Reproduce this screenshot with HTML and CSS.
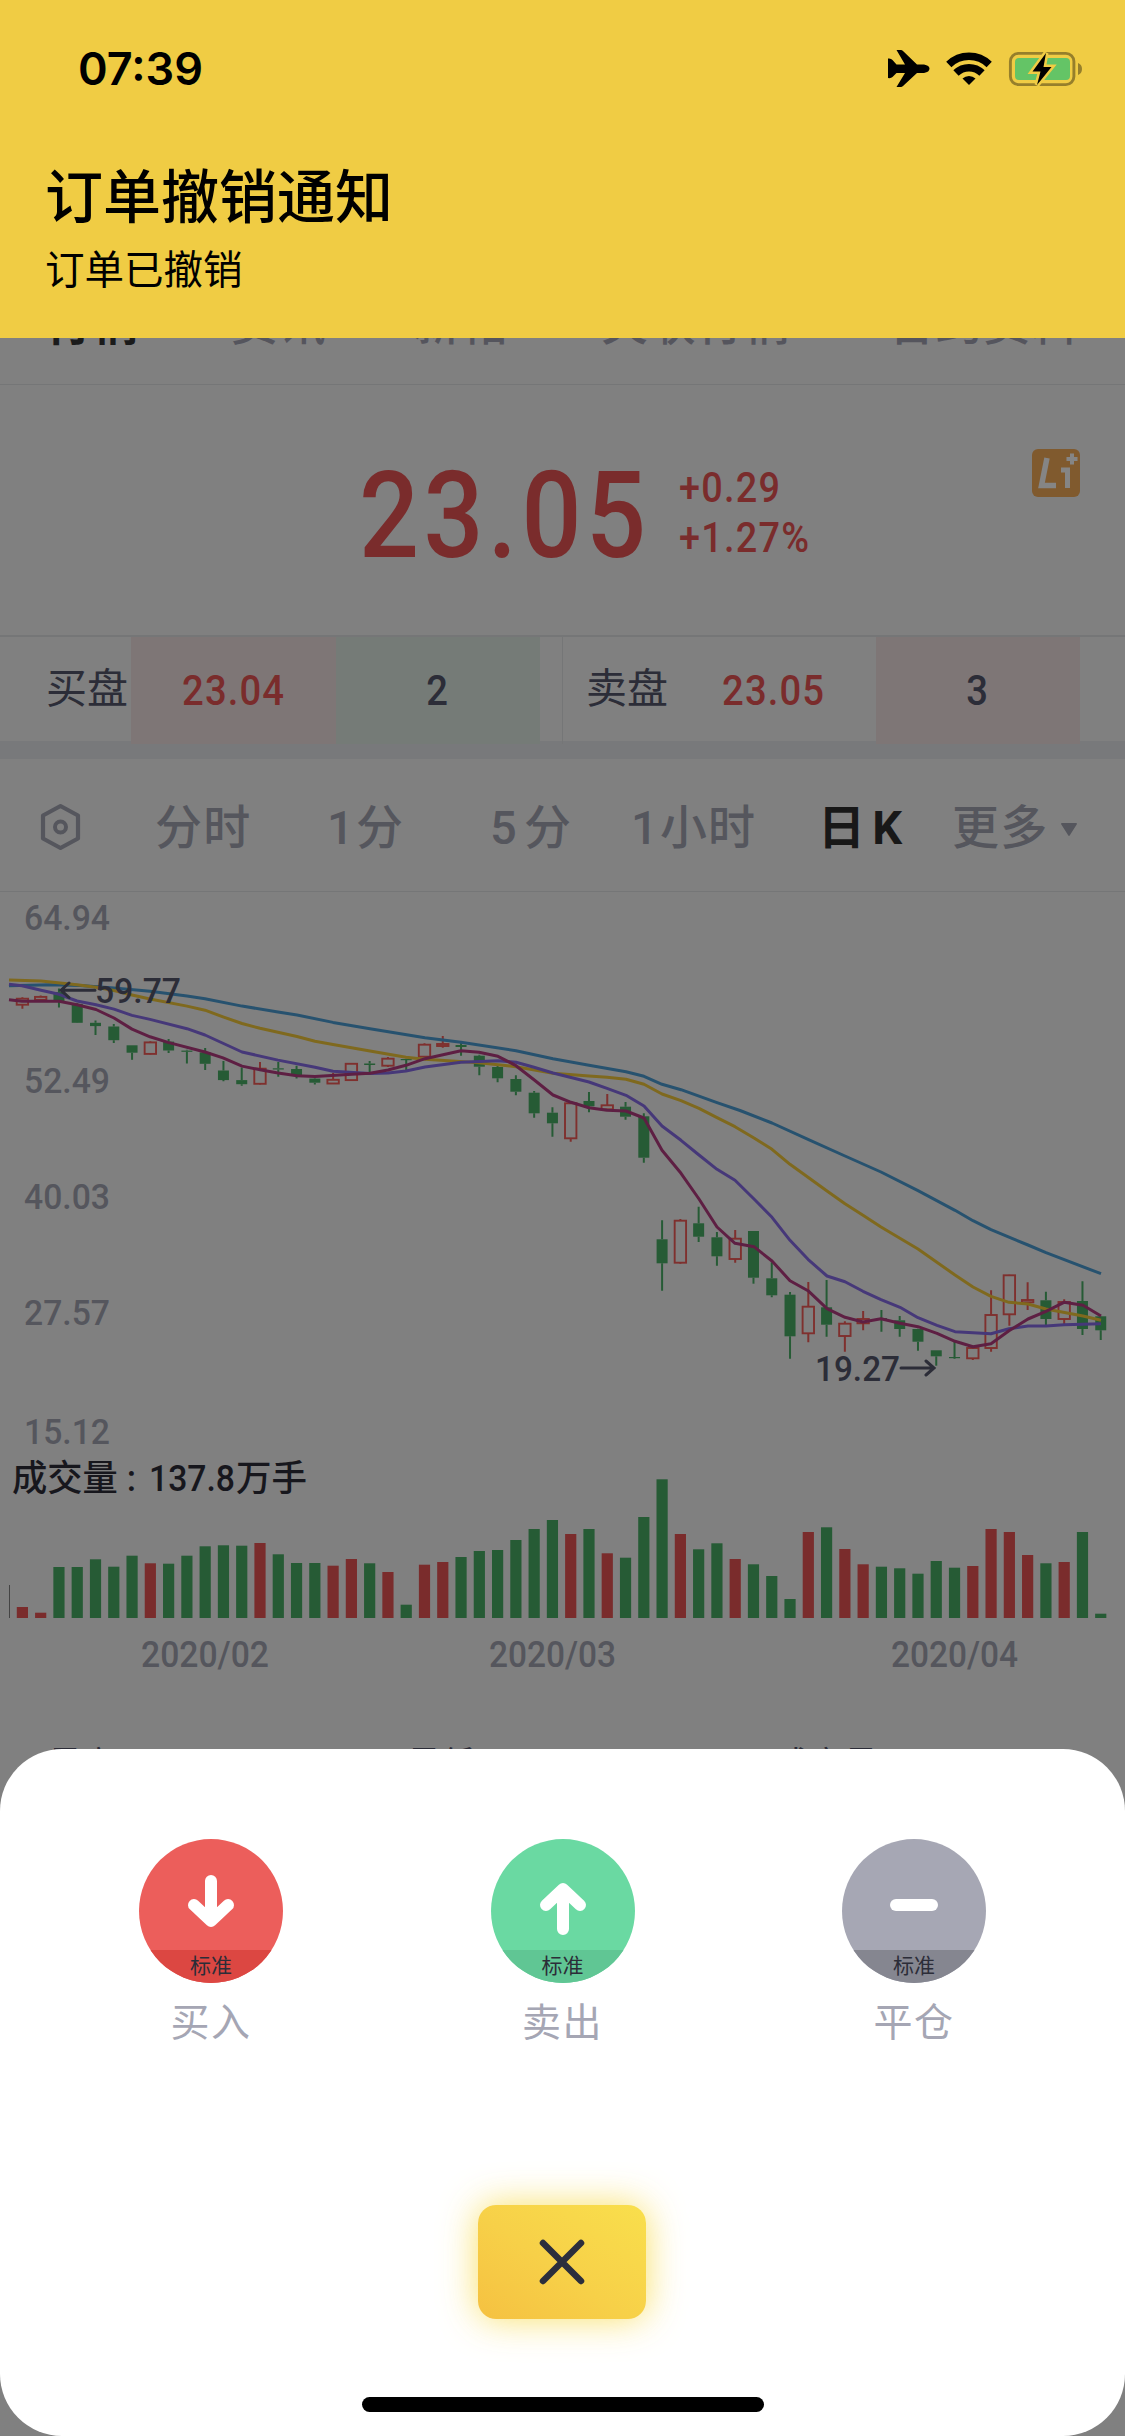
FILE: index.html
```html
<!DOCTYPE html>
<html lang="zh-CN">
<head>
<meta charset="utf-8">
<title>行情</title>
<link rel="stylesheet" href="styles.css">
</head>
<body>
<div class="phone">
  <main class="quote">
    <nav class="tabs">
      <span class="tab tab-active">行情</span>
      <span class="tab">资讯</span>
      <span class="tab">新帖</span>
      <span class="tab">关联行情</span>
      <span class="tab">合约资料</span>
    </nav>

    <section class="price">
      <div class="price-last">23.05</div>
      <div class="price-change"><span>+0.29</span><span>+1.27%</span></div>
      <svg class="level" viewBox="0 0 48 48">
        <rect width="48" height="48" rx="6" fill="#805a2e"/>
        <path d="M15 9 L9.500 36.500 H24" fill="none" stroke="#858585" stroke-width="5.500"/>
        <path d="M29 21 H35.500 V39" fill="none" stroke="#858585" stroke-width="5"/>
        <path d="M40 4.500 V15.500 M34.500 10 H45.500" fill="none" stroke="#858585" stroke-width="4"/>
      </svg>
    </section>

    <section class="depth">
      <span class="depth-name">买盘</span>
      <span class="depth-cell red tint-red"><b>23.04</b></span>
      <span class="depth-cell tint-green"><b>2</b></span>
      <span class="depth-name depth-ask">卖盘</span>
      <span class="depth-cell red"><b>23.05</b></span>
      <span class="depth-cell tint-red"><b>3</b></span>
    </section>

    <nav class="periods">
      <svg class="hex" viewBox="0 0 44 48"><path d="M22 3 L39.500 12.500 V35.500 L22 45 L4.500 35.500 V12.500 Z" fill="none" stroke="#55565d" stroke-width="4.200" stroke-linejoin="round"/><circle cx="22" cy="24" r="5.500" fill="none" stroke="#55565d" stroke-width="4"/></svg>
      <span>分时</span>
      <span>1<i></i>分</span>
      <span>5<i class="wide"></i>分</span>
      <span>1<i></i>小时</span>
      <span class="period-active">日<i class="wide"></i>K</span>
      <span class="more">更多<svg viewBox="0 0 18 15"><path d="M1 2 Q1 1 2 1 H16 Q17 1 17 2 L10 13 Q9 15 8 13 Z" fill="#55565d"/></svg></span>
    </nav>

    <svg class="chart" id="chart" viewBox="0 892 1125 840"></svg>

    <section class="stats"><span>最高</span><span>最低</span><span>成交量</span></section>
  </main>

  <header class="notice">
    <div class="status">
      <span class="clock">07:39</span>
      <svg class="status-icons" viewBox="885 45 200 48">
        <path d="M888 58.500 Q891 58 892.500 60 L896.500 64.500 H905 L896.500 50 H901 Q902 50 903 51 L917 64.500 H924 Q929.500 65.500 929.500 68.500 Q929.500 72 924 73 H917 L903 86 Q902 87 901 87 H896.500 L905 73 H896.500 L892.500 77 Q891 78.500 888 78 Z"/>
        <g fill="none" stroke="#000" stroke-width="7.500">
          <path d="M948.800 64.500 A29 29 0 0 1 989.200 64.500"/>
          <path d="M956 73 A18.500 18.500 0 0 1 982 73"/>
        </g>
        <path d="M969 85 L962.500 78.500 A9.500 9.500 0 0 1 975.500 78.500 Z"/>
        <rect x="1010.400" y="53.400" width="63.500" height="31.200" rx="8" fill="none" stroke="#967f2b" stroke-width="2.900"/>
        <path d="M1078 63 Q1082 64.500 1082 69 Q1082 73.500 1078 75 Z" fill="#967f2b"/>
        <rect x="1015" y="58" width="55" height="22" rx="4" fill="#64c466"/>
        <path d="M1046 53 L1032.500 71.500 H1040.500 L1037 85 L1051.500 67 H1043.500 Z" fill="#000" stroke="#f0cc44" stroke-width="5"/>
        <path d="M1046 53 L1032.500 71.500 H1040.500 L1037 85 L1051.500 67 H1043.500 Z"/>
      </svg>
    </div>
    <h1>订单撤销通知</h1>
    <p>订单已撤销</p>
  </header>

  <section class="sheet">
    <div class="actions">
      <div class="action">
        <div class="disc buy"><svg viewBox="0 0 144 111"><path d="M72 42 V80 M55 66 L72 82 L89 66"/></svg><b>标准</b></div>
        <span>买入</span>
      </div>
      <div class="action">
        <div class="disc sell"><svg viewBox="0 0 144 111"><path d="M72 90 V52 M55 66 L72 50 L89 66"/></svg><b>标准</b></div>
        <span>卖出</span>
      </div>
      <div class="action">
        <div class="disc flat"><svg viewBox="0 0 144 111"><path d="M54 66 H90"/></svg><b>标准</b></div>
        <span>平仓</span>
      </div>
    </div>
    <button class="close"><svg viewBox="0 0 48 48"><path d="M5 5 L43 43 M43 5 L5 43"/></svg></button>
    <div class="home"></div>
  </section>
</div>
<script src="chart.js"></script>
</body>
</html>
```
FILE: styles.css
```css
* { box-sizing: border-box; }
body { margin: 0; background: #808080; }
.phone {
  position: relative;
  width: 1125px;
  height: 2436px;
  overflow: hidden;
  background: #808080;
  color: #2c2d38;
  font-family: Roboto, "Noto Sans CJK SC", sans-serif;
}
.quote { display: flex; flex-direction: column; padding-top: 290px; }

.tabs {
  display: grid;
  grid-template-columns: 186px 182px 188px 287px auto;
  height: 95px;
  padding-left: 45px;
  border-bottom: 1px solid #757677;
  color: #55555d;
  font-size: 47px;
  font-weight: 500;
  line-height: 67px;
  letter-spacing: 0.800px;
}
.tab-active { color: #1b1b1b; font-weight: 700; }

.price {
  display: flex;
  height: 250px;
  padding-left: 359px;
  color: #7a2c2c;
  font-weight: 500;
}
.price-last {
  width: 320px;
  padding-top: 60px;
  font-size: 120px;
  line-height: 142px;
  letter-spacing: 5px;
  transform: scaleX(.88);
  transform-origin: 0 0;
}
.price-change {
  display: flex;
  flex-direction: column;
  width: 353px;
  padding-top: 78px;
  font-size: 42px;
  line-height: 50px;
  letter-spacing: 1.400px;
  transform: scaleX(.9);
  transform-origin: 0 0;
}
.level { width: 48px; height: 48px; margin-top: 64px; }

.depth {
  display: grid;
  grid-template-columns: 131px 205px 204px 131px 205px 204px;
  height: 124px;
  border-top: 2px solid #757677;
  border-bottom: 18px solid #78797b;
  font-size: 41px;
  line-height: 104px;
}
.depth-name { padding-left: 46px; white-space: nowrap; }
.depth-ask { margin-left: 22px; padding-left: 23px; border-left: 1px solid #757677; }
.depth-cell { text-align: center; font-size: 42px; line-height: 107px; }
.depth-cell b { display: inline-block; font-weight: 500; letter-spacing: 1.200px; transform: scaleX(.91); }
.red { color: #7a2c2c; }
.tint-red { background: #7e7676; }
.tint-green { background: #757b77; }

.periods {
  display: grid;
  grid-template-columns: 117px 172px 163px 141px 187px 134px auto;
  height: 133px;
  padding-left: 38px;
  border-bottom: 1px solid #757677;
  color: #55565d;
  font-size: 47px;
  font-weight: 500;
  line-height: 137px;
  letter-spacing: 1.200px;
  white-space: nowrap;
}
.hex { width: 45px; height: 48px; margin-top: 44px; }
.periods i { display: inline-block; width: 1px; }
.periods i.wide { width: 6px; }
.period-active { color: #181818; font-weight: 700; }
.more svg { width: 18px; height: 15px; margin-left: 12px; vertical-align: 7px; }

.chart { display: block; width: 1125px; height: 840px; }
.chart text { font-weight: 500; }
.axis { fill: #55565d; font-size: 35px; }
.date { fill: #55565d; font-size: 36px; }
.mark { fill: #2c2d38; font-size: 35px; }
.volume { fill: #17171d; font-size: 36px; }
.arrow { fill: none; stroke: #2c2d38; stroke-width: 3; stroke-linecap: round; }
.ma { fill: none; stroke-width: 3; stroke-linejoin: round; }
.up { stroke: #7f302e; }
.down { stroke: #265b35; }

.stats {
  display: grid;
  grid-template-columns: 359px 369px auto;
  padding: 10px 0 0 48px;
  font-size: 34px;
  line-height: 44px;
}

.notice {
  position: absolute;
  top: 0;
  left: 0;
  width: 100%;
  height: 338px;
  padding: 0 45px;
  background: #f0cc44;
  color: #000;
}
.status { display: flex; justify-content: space-between; padding-left: 33px; padding-top: 45px; margin-right: -5px; }
.clock { font: 600 45px/48px Inter, sans-serif; }
.status-icons { width: 200px; height: 48px; }
.notice h1 { margin: 63px 0 0; font-size: 58px; font-weight: 500; line-height: 84px; }
.notice p { margin: 2px 0 0; font-size: 39.500px; line-height: 58px; }

.sheet {
  position: absolute;
  left: 0;
  bottom: 0;
  display: flex;
  flex-direction: column;
  align-items: center;
  width: 100%;
  height: 687px;
  padding-top: 90px;
  border-radius: 62px;
  background: #fff;
}
.actions { display: flex; gap: 207.500px; height: 366px; }
.action { width: 144px; text-align: center; color: #a5a6b4; font-size: 39px; line-height: 58px; }
.action > span { display: block; margin-top: 11px; letter-spacing: 1.500px; }
.disc { display: flex; flex-direction: column; height: 144px; overflow: hidden; border-radius: 50%; }
.disc svg { height: 111px; fill: none; stroke: #fff; stroke-width: 12; stroke-linecap: round; stroke-linejoin: round; }
.disc b { height: 33px; color: #2c2d38; font-size: 21px; font-weight: 400; line-height: 32px; }
.buy { background: #ec5e5b; }
.buy b { background: #dc4742; }
.sell { background: #6ad9a2; }
.sell b { background: #60c694; }
.flat { background: #a6a7b4; }
.flat b { background: #858690; }
.close {
  display: flex;
  align-items: center;
  justify-content: center;
  width: 168px;
  height: 114px;
  margin-right: 1px;
  padding: 0;
  border: 0;
  border-radius: 18px;
  background: linear-gradient(35deg, #f5c141, #f7d048 45%, #f9df4c);
  box-shadow: 0 0 36px rgba(248, 218, 76, .85);
}
.close svg { width: 48px; height: 48px; fill: none; stroke: #2c2e3c; stroke-width: 6.500; stroke-linecap: round; }
.home { width: 402px; height: 15px; margin-top: 78px; border-radius: 8px; background: #000; }
```
FILE: chart.js
```javascript
// Daily candles: direction, high, body top, body bottom, low, volume height
const candles = [
['r',997.3,998.7,1004.7,1008.7,11],['r',995.4,996.9,999.8,1000,5.3],['g',988.4,992.1,1001.3,1007.6,51],
['g',1003.2,1003.9,1022.8,1023,51],['g',1020.6,1022.8,1026.1,1035,58.7],['g',1023.9,1026.5,1040.2,1043.1,51.3],
['g',1045.3,1045.3,1052.7,1059.8,62.3],['r',1041.3,1042.4,1053.9,1054.5,54.7],['g',1039.1,1041.6,1050.5,1053.1,54.3],
['g',1049.8,1050.6,1051.8,1063.5,62.3],['g',1047.9,1052.4,1063.8,1070.1,71.7],['g',1060.9,1070.5,1080.1,1081.2,72.7],
['g',1067.5,1080.1,1084.2,1085.7,72.3],['r',1062,1068.7,1083.8,1084.5,75],['g',1062,1068.3,1069.4,1076.8,63.7],
['g',1065.7,1069,1076,1078.6,55],['g',1076.8,1078.6,1082.7,1084.6,55],['r',1073.1,1079.8,1083.5,1084,52.3],
['r',1063.1,1063.8,1080.1,1080.8,59],['g',1060.9,1063.5,1065,1072,54.7],['r',1057,1058.7,1065.7,1067,46],
['g',1058.7,1059,1060,1070,13.3],['r',1043.3,1044.7,1056.7,1057,53.3],['r',1036,1044,1046,1047.7,56],
['g',1042.3,1045,1047,1055.7,61],['g',1054.7,1055.7,1066.7,1075.3,67],['g',1065.3,1067,1078.3,1082.3,68],
['g',1075.3,1079,1091.7,1095.3,78],['g',1091,1092.7,1113.3,1117.7,89],['g',1107.3,1112.7,1123.3,1136.7,98],
['r',1102.7,1103.3,1138.3,1141.7,84],['g',1092,1101,1106.3,1112.3,89],['r',1094,1105.3,1109.3,1110,64.7],
['g',1102,1106.7,1116.7,1119.7,60.3],['g',1113.3,1116.3,1157.7,1162.7,101],['g',1220.3,1239.3,1263.3,1290.7,138.7],
['r',1219,1220.7,1262.7,1263.7,84],['g',1206.7,1223.3,1236.7,1242,68.7],['g',1232,1237.3,1256.3,1265.7,74.7],
['r',1230,1238.7,1259,1262.7,59],['g',1231,1231,1277.7,1283.7,53.7],['g',1262.3,1278.3,1295.3,1297.3,42],
['g',1292,1294.7,1336.3,1358.7,19],['r',1282,1306.7,1333.3,1342.3,86],['g',1280,1307.3,1324.7,1336.7,90.7],
['r',1321.3,1323.7,1336,1351.7,69],['r',1311,1319,1323.3,1330.3,53.7],['g',1310,1318,1318.7,1331.7,51.3],
['g',1316,1320.3,1329,1336.7,49.7],['g',1328.7,1329,1341.7,1350.7,44.3],['g',1350.3,1350.3,1356.3,1365.7,57],
['g',1341.3,1357,1358,1358.7,50.3],['r',1346.7,1348,1358.3,1360,52],['r',1290.3,1315,1348,1351.7,89],
['r',1274.7,1275.3,1314.3,1325.7,86],['r',1282.3,1300,1302.3,1310,63],['g',1291.7,1300.3,1319,1326,54.7],
['r',1299.3,1302,1319,1324,56],['g',1281.3,1301,1329,1335,86],['g',1316,1316.3,1330.3,1340,4.3]
];

const averages = [
['#27526f','9,985.8 50,984.7 80,985.4 114,988 150,991.3 187,996.1 205,998.7 242,1006.1 278,1012 297,1015 333,1022.4 370,1028.7 425,1037.7 461,1042.3 516,1050.7 553,1058.7 589,1065.3 626,1071.7 644,1076.3 662,1084.3 681,1089.7 717,1102.7 740,1110.5 772,1123 808,1139.3 845,1156 881,1172 918,1190.7 955,1210.3 973,1220.7 991,1229.7 1028,1245 1046,1252.7 1101,1273.7'],
['#7f691e','9,979.9 41,981 77,984.7 96,987.3 114,990.6 132,995 150,999 187,1006.1 205,1010.2 223,1016.9 242,1023.5 260,1028.3 297,1036.5 315,1041.3 333,1044.6 370,1051 406,1057.3 425,1059.3 479,1062.7 516,1066.7 553,1073.3 589,1076 607,1077.3 626,1079.3 644,1084.3 662,1094 681,1100.7 699,1108.3 717,1117.7 735,1126.7 754,1138 772,1149.3 790,1164.3 808,1177.3 827,1191 845,1203.7 863,1215.3 881,1227 918,1249 955,1275 973,1287 991,1296.3 1009,1302.3 1028,1304 1046,1309 1083,1316 1101,1320.3'],
['#463879','9,984.3 22,985.8 41,990.2 59,994.3 77,1001 96,1004.7 114,1009.1 132,1015.4 150,1019.4 187,1028.7 205,1035 242,1052 278,1060.1 315,1067.2 333,1071.2 370,1073.5 388,1073 406,1071 425,1067 461,1062.3 498,1060.7 516,1062.3 534,1067.3 553,1073 589,1082 607,1088.3 626,1095.3 644,1106 662,1126 681,1140.3 699,1155 717,1169.3 735,1180.3 754,1199 772,1217.3 790,1240.3 808,1259.3 827,1276 845,1281.7 863,1291.3 881,1299.7 900,1307.3 918,1317.7 937,1325.3 955,1331.7 991,1333.7 1009,1328.7 1028,1326 1046,1326 1064,1324.7 1101,1323.7'],
['#5e1f43','9,999.8 22,1001.3 59,1001.3 77,1004.7 96,1009.5 114,1018 132,1029.1 150,1036.8 168,1042.4 205,1052 223,1057.9 242,1066.1 260,1069.8 278,1073.1 297,1075.7 315,1076.4 352,1074.2 370,1073.3 388,1070 406,1065.3 425,1058.7 461,1050.7 479,1052.3 498,1056.3 516,1065.7 534,1079.7 553,1095 571,1102.3 589,1107.7 607,1110.3 626,1111 644,1118 662,1150.3 681,1173.3 699,1199 717,1227 735,1243.3 754,1246.7 772,1261 790,1280.7 808,1290.7 827,1308.7 845,1317.3 863,1322 881,1318.7 900,1323.3 918,1326.7 937,1333.3 955,1341.3 973,1346.7 991,1343.7 1009,1330.7 1028,1319 1046,1311.3 1064,1302.3 1083,1305.3 1101,1316']
];

const red = '#7a2c2c', green = '#265b35', base = 1618;
const label = (cls, x, y, w, s) =>
  `<text class="${cls}" x="${x}" y="${y}" textLength="${w}" lengthAdjust="spacingAndGlyphs">${s}</text>`;
let out = '';

[['64.94',929.6],['52.49',1093],['40.03',1208.5],['27.57',1324.6],['15.12',1443.7]]
  .forEach(([s, y]) => { out += label('axis', 24, y, 86, s); });

candles.forEach(([dir, high, top, bottom, low, vol], i) => {
  const x = 22.4 + 18.277 * i;
  const up = dir === 'r';
  const h = Math.max(bottom - top, 1.2);
  const cls = up ? 'up' : 'down';
  out += `<path class="${cls}" stroke-width="2" d="M${x} ${high}V${top}M${x} ${bottom}V${low}"/>`;
  out += up
    ? `<rect class="up" stroke-width="1.900" fill="none" x="${x - 5.7}" y="${top}" width="11.400" height="${h}"/>`
    : `<rect fill="${green}" x="${x - 5.5}" y="${top}" width="11" height="${h}"/>`;
  out += `<rect fill="${up ? red : green}" x="${x - 5.6}" y="${base - vol}" width="11.200" height="${vol}"/>`;
});
averages.forEach(([color, points]) => { out += `<polyline class="ma" stroke="${color}" points="${points}"/>`; });

out += `<path class="arrow" d="M95 990.200H61M69 983L61 990.200L69 997.500M901 1368H934M926 1361L934 1368L926 1375"/>`;
out += label('mark', 95, 1002.500, 86, '59.77') + label('mark', 815, 1381, 85, '19.27');
out += label('volume', 12, 1490.500, 124, '成交量 :') + label('volume', 149, 1490.500, 86, '137.8') + label('volume', 236, 1490.500, 71, '万手');
out += `<rect fill="#444" x="9" y="1585" width="1" height="33"/>`;
out += label('date', 141, 1667, 128, '2020/02') + label('date', 489, 1667, 127, '2020/03') + label('date', 891, 1667, 127, '2020/04');
document.getElementById('chart').innerHTML = out;
```
